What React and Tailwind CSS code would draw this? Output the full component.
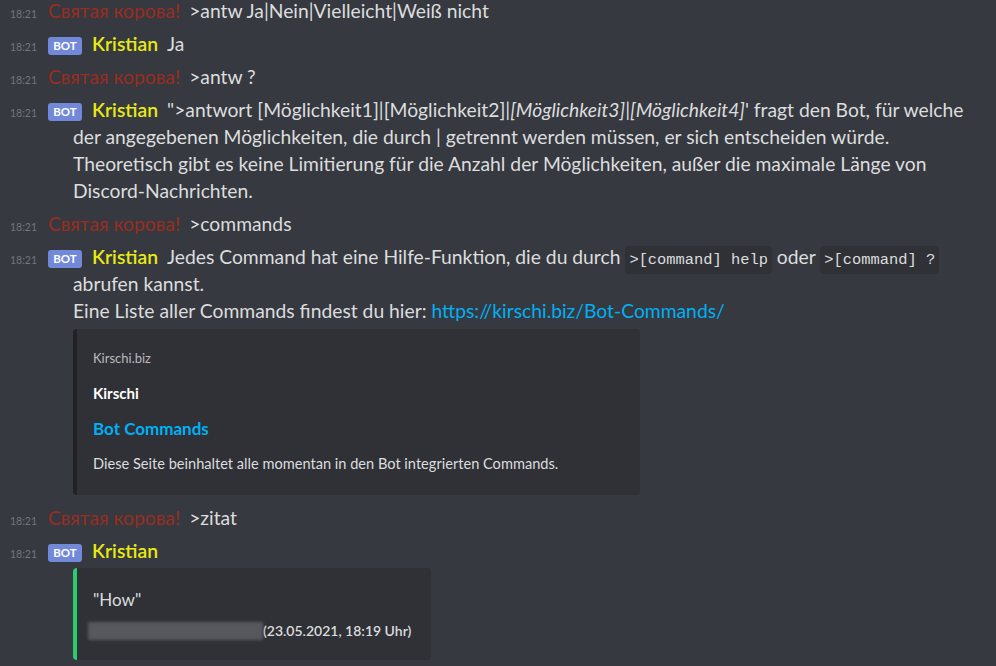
import React from 'react'

const RED = 'Святая корова!'

function Time() {
  return <span className="inline-block indent-0 w-[38px] leading-[14px] text-[10.5px] text-[#72767d]">18:21</span>
}

function Bot() {
  return (
    <span className="inline-block indent-0 w-[34px] h-[18px] leading-[18px] text-center rounded-[3px] bg-[#7289da] text-white text-[11.5px] font-bold mr-[10px] align-[1px]">
      BOT
    </span>
  )
}

function Msg({ children }) {
  return (
    <div className="pl-[73px] pr-[10px] -indent-[63px] py-[3px] leading-[27px] text-[19.3px] text-[#dcddde]">
      {children}
    </div>
  )
}

function Cow({ text }) {
  return (
    <Msg>
      <Time />
      <span className="text-[#992d22] mr-[9px]">{RED}</span>
      {text}
    </Msg>
  )
}

function Kristian() {
  return <span className="font-semibold text-[#e9e915] mr-[9px]">Kristian</span>
}

function Code({ children }) {
  return (
    <code className="px-[4px] py-[5px] rounded-[4px] bg-[#2f3136] leading-[16px] text-[15.4px] text-[#dcddde] font-['Liberation_Mono',monospace]">
      {children}
    </code>
  )
}

export default function App() {
  return (
    <div className="w-[996px] h-[666px] overflow-hidden bg-[#36393f] font-['Lato','Noto_Sans',sans-serif]">
      <div className="-mt-[6px]">
        <Cow text=">antw Ja|Nein|Vielleicht|Weiß nicht" />
        <Msg><Time /><Bot /><Kristian />Ja</Msg>
        <Cow text=">antw ?" />
        <Msg>
          <Time /><Bot /><Kristian />
          "&gt;antwort [Möglichkeit1]|[Möglichkeit2]<em>|[Möglichkeit3]|[Möglichkeit4]</em>' fragt den Bot, für welche der angegebenen Möglichkeiten, die durch | getrennt werden müssen, er sich entscheiden würde.
          <br />Theoretisch gibt es keine Limitierung für die Anzahl der Möglichkeiten, außer die maximale Länge von Discord-Nachrichten.
        </Msg>
        <Cow text=">commands" />
        <Msg>
          <Time /><Bot /><Kristian />
          Jedes Command hat eine Hilfe-Funktion, die du durch <Code>&gt;[command] help</Code> oder <Code>&gt;[command] ?</Code> abrufen kannst.
          <br />Eine Liste aller Commands findest du hier: <span className="text-[#00b0f4]">https://kirschi.biz/Bot-Commands/</span>
          <div className="indent-0 w-[567px] mt-[5px] mb-[3px] rounded-[4px] border-l-4 border-[#202225] bg-[#2f3136] pl-[16px] pr-4 pt-[17px] pb-[19px] flex flex-col">
            <span className="text-[13px] leading-[24px] text-[#b9bbbe]">Kirschi.biz</span>
            <span className="mt-[11px] text-[15px] leading-[24px] font-bold text-white">Kirschi</span>
            <span className="mt-[12px] text-[17px] leading-[24px] font-bold text-[#00b0f4]">Bot Commands</span>
            <span className="mt-[11px] text-[14.6px] leading-[24px] text-[#dcddde]">Diese Seite beinhaltet alle momentan in den Bot integrierten Commands.</span>
          </div>
        </Msg>
        <Cow text=">zitat" />
        <Msg>
          <Time /><Bot /><Kristian />
          <div className="indent-0 w-[358px] mt-[4px] rounded-[4px] border-l-4 border-[#2ecc71] bg-[#2f3136] pl-[16px] pt-[20px] pb-[17px] flex flex-col">
            <span className="text-[17px] leading-[24px] text-[#dcddde]">"How"</span>
            <span className="mt-[7px] flex items-center whitespace-nowrap text-[14px] leading-[24px] font-semibold text-[#dcddde]">
              <span className="-ml-[5px] inline-block w-[175px] h-[18px] bg-[#56585d] blur-[1.5px]" />
              (23.05.2021, 18:19 Uhr)
            </span>
          </div>
        </Msg>
      </div>
    </div>
  )
}
